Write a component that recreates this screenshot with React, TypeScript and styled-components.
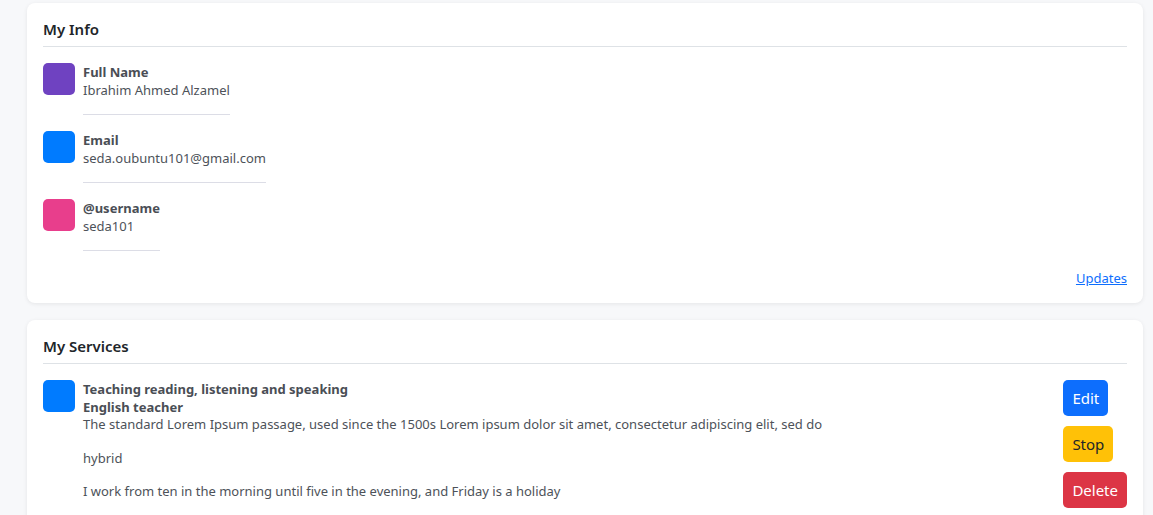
import React from "react";
import styled, { createGlobalStyle } from "styled-components";

const Global = createGlobalStyle`
  html, body { margin: 0; padding: 0; background: #f7f8fa; }
  body { font-family: "Noto Sans", "Open Sans", sans-serif; color: #495057; }
  * { box-sizing: border-box; }
`;

const Page = styled.div`
  padding: 3px 10px 20px 27px;
  display: flex;
  flex-direction: column;
  gap: 17px;
`;

const Card = styled.section`
  background: #fff;
  border-radius: 8px;
  box-shadow: 0 1px 4px rgba(0, 0, 0, 0.08);
  padding: 16px;
  display: flex;
  flex-direction: column;
`;

const CardTitle = styled.h2`
  margin: 0;
  font-size: 15px;
  line-height: 20px;
  font-weight: 600;
  color: #212529;
  padding-bottom: 7px;
  border-bottom: 1px solid #dee2e6;
  margin-bottom: 16px;
`;

const InfoItem = styled.div`
  display: flex;
  gap: 8px;
  margin-bottom: 16px;
`;

const Square = styled.div<{ $color: string }>`
  width: 32px;
  height: 32px;
  border-radius: 5px;
  background: ${(p) => p.$color};
  flex-shrink: 0;
`;

const InfoText = styled.div`
  display: flex;
  flex-direction: column;
  padding-bottom: 15px;
  border-bottom: 1px solid #dcdde6;
  font-size: 13px;
  line-height: 18px;
`;

const Label = styled.div`
  font-weight: 700;
  color: #4a4e55;
`;

const Value = styled.div`
  color: #4d5259;
`;

const Footer = styled.div`
  display: flex;
  justify-content: flex-end;
  font-size: 13px;
  line-height: 18px;
  padding-top: 2px;
`;

const Link = styled.a`
  color: #0d6efd;
  text-decoration: underline;
  cursor: pointer;
`;

const ServiceRow = styled.div`
  display: flex;
  gap: 8px;
  align-items: flex-start;
`;

const ServiceBody = styled.div`
  flex: 1;
  padding-top: 1px;
  font-size: 13px;
  line-height: 17.5px;
  color: #4d5259;
`;

const ServiceHead = styled.div`
  font-weight: 700;
  color: #4a4e55;
`;

const Para = styled.p`
  margin: 0 0 16px;
`;

const Actions = styled.div`
  display: flex;
  flex-direction: column;
  align-items: flex-start;
  gap: 10px;
`;

const Btn = styled.button<{ $bg: string; $fg: string }>`
  font-family: inherit;
  font-size: 15px;
  line-height: 20px;
  padding: 8px 9px;
  border: none;
  border-radius: 5px;
  background: ${(p) => p.$bg};
  color: ${(p) => p.$fg};
  cursor: pointer;
`;

const info = [
  { color: "#6f42c1", label: "Full Name", value: "Ibrahim Ahmed Alzamel" },
  { color: "#007bff", label: "Email", value: "seda.oubuntu101@gmail.com" },
  { color: "#e83e8c", label: "@username", value: "seda101" },
];

export default function App() {
  return (
    <>
      <Global />
      <Page>
        <Card>
          <CardTitle>My Info</CardTitle>
          {info.map((i) => (
            <InfoItem key={i.label}>
              <Square $color={i.color} />
              <InfoText>
                <Label>{i.label}</Label>
                <Value>{i.value}</Value>
              </InfoText>
            </InfoItem>
          ))}
          <Footer>
            <Link>Updates</Link>
          </Footer>
        </Card>
        <Card>
          <CardTitle>My Services</CardTitle>
          <ServiceRow>
            <Square $color="#007bff" />
            <ServiceBody>
              <ServiceHead>Teaching reading, listening and speaking</ServiceHead>
              <ServiceHead>English teacher</ServiceHead>
              <Para>
                The standard Lorem Ipsum passage, used since the 1500s Lorem ipsum dolor sit amet, consectetur adipiscing elit, sed do
              </Para>
              <Para>hybrid</Para>
              <Para>I work from ten in the morning until five in the evening, and Friday is a holiday</Para>
            </ServiceBody>
            <Actions>
              <Btn $bg="#0d6efd" $fg="#fff">Edit</Btn>
              <Btn $bg="#ffc107" $fg="#212529">Stop</Btn>
              <Btn $bg="#dc3545" $fg="#fff">Delete</Btn>
            </Actions>
          </ServiceRow>
        </Card>
      </Page>
    </>
  );
}
